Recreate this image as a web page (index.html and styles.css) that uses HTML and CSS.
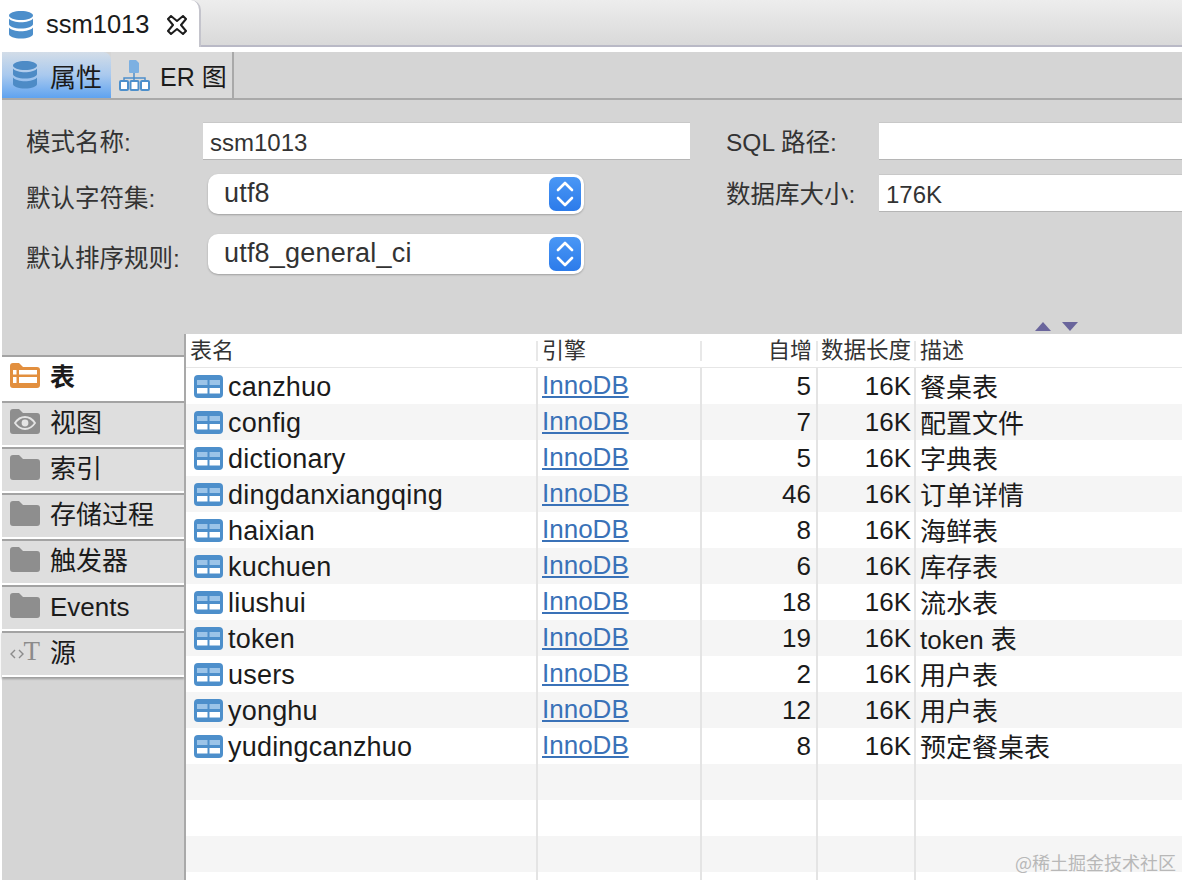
FILE: index.html
```html
<!DOCTYPE html>
<html lang="zh">
<head>
<meta charset="utf-8">
<title>ssm1013</title>
<link rel="stylesheet" href="styles.css">
</head>
<body>
<svg class="defs" width="0" height="0" aria-hidden="true">
  <defs>
    <symbol id="db" viewBox="0 0 26 28">
      <path fill="currentColor" d="M1 4.500C1 1.800 6.400 0 13 0s12 1.800 12 4.500S19.600 9 13 9 1 7.200 1 4.500z"/>
      <path fill="currentColor" d="M1 7.500C3 10.200 8 11.200 13 11.200s10-1 12-3.700V13c0 2.700-5.400 4.500-12 4.500S1 15.700 1 13z"/>
      <path fill="currentColor" d="M1 16.500c2 2.700 7 3.700 12 3.700s10-1 12-3.700V23c0 2.700-5.400 4.500-12 4.500S1 25.700 1 23z"/>
    </symbol>
    <symbol id="tbl" viewBox="0 0 29 23">
      <rect width="29" height="23" rx="4" fill="#4d8fcb"/>
      <rect x="3" y="5" width="10.500" height="5" fill="#9cc4e8"/>
      <rect x="15.500" y="5" width="10.500" height="5" fill="#9cc4e8"/>
      <rect x="3" y="13" width="10.500" height="5.500" fill="#fff"/>
      <rect x="15.500" y="13" width="10.500" height="5.500" fill="#fff"/>
    </symbol>
    <symbol id="folder" viewBox="0 0 30 25">
      <path fill="#8e8e8e" d="M0 3a3 3 0 0 1 3-3h6l4 4h14a3 3 0 0 1 3 3v15a3 3 0 0 1-3 3H3a3 3 0 0 1-3-3z"/>
    </symbol>
  </defs>
</svg>

<div class="tabbar">
  <div class="doc-tab">
    <svg class="doc-icon"><use href="#db"/></svg>
    <span>ssm1013</span>
    <svg class="close" viewBox="0 0 22 20">
      <path fill="#fff" stroke="#1c1c1c" stroke-width="2" stroke-linejoin="round" d="M2 4l3-3 6 5 6-5 3 3-5 6 5 6-3 3-6-5-6 5-3-3 5-6z"/>
    </svg>
  </div>
</div>

<div class="subtabs">
  <div class="subtab active">
    <svg class="sub-db"><use href="#db"/></svg>
    <span>属性</span>
  </div>
  <div class="subtab er">
    <svg class="er-icon" viewBox="0 0 32 32">
      <path d="M11 1h6l3 3v9a1 1 0 0 1-1 1h-8a1 1 0 0 1-1-1V2a1 1 0 0 1 1-1z" fill="#7cb0e2"/>
      <path d="M15 14v5M5 21v-2h21v2M15 19v2" fill="none" stroke="#4d8fcb" stroke-width="1.500"/>
      <g fill="#fff" stroke="#4d8fcb" stroke-width="2">
        <rect x="1" y="22" width="8" height="9" rx="1"/>
        <rect x="11.500" y="22" width="8" height="9" rx="1"/>
        <rect x="22" y="22" width="8" height="9" rx="1"/>
      </g>
    </svg>
    <span class="er-label">ER 图</span>
  </div>
</div>

<section class="form">
  <div class="form-col">
    <div class="field field-first">
      <label class="lbl">模式名称:</label>
      <div class="input wide">ssm1013</div>
    </div>
    <div class="field field-sel">
      <label class="lbl">默认字符集:</label>
      <div class="select">utf8<span class="stepper"><svg viewBox="0 0 32 34"><path d="M9 13l7-7 7 7M9 21l7 7 7-7" fill="none" stroke="#fff" stroke-width="2.600" stroke-linecap="round" stroke-linejoin="round"/></svg></span></div>
    </div>
    <div class="field field-sel2">
      <label class="lbl">默认排序规则:</label>
      <div class="select">utf8_general_ci<span class="stepper"><svg viewBox="0 0 32 34"><path d="M9 13l7-7 7 7M9 21l7 7 7-7" fill="none" stroke="#fff" stroke-width="2.600" stroke-linecap="round" stroke-linejoin="round"/></svg></span></div>
    </div>
  </div>
  <div class="form-col right">
    <div class="field field-first">
      <label class="lbl r-lbl">SQL 路径:</label>
      <div class="input grow"></div>
    </div>
    <div class="field field-r2">
      <label class="lbl r-lbl">数据库大小:</label>
      <div class="input grow">176K</div>
    </div>
  </div>
  <div class="split-arrows">
    <svg viewBox="0 0 16 9"><path d="M8 0l8 9H0z" fill="#6a659c"/></svg>
    <svg viewBox="0 0 16 9"><path d="M0 0h16L8 9z" fill="#6a659c"/></svg>
  </div>
</section>

<div class="lower">
  <nav class="side">
    <div class="side-gap"></div>
    <div class="side-item selected">
      <svg class="side-icon" viewBox="0 0 30 25"><path fill="#e28f3e" d="M0 3a3 3 0 0 1 3-3h6l4 4h14a3 3 0 0 1 3 3v15a3 3 0 0 1-3 3H3a3 3 0 0 1-3-3z"/><g fill="#fff"><rect x="3" y="7" width="3.500" height="4.500"/><rect x="9" y="7" width="18" height="4.500"/><rect x="3" y="14" width="3.500" height="6"/><rect x="9" y="14" width="18" height="6"/></g></svg>
      <span>表</span>
    </div>
    <div class="side-item">
      <svg class="side-icon" viewBox="0 0 30 25"><path fill="#8e8e8e" d="M0 3a3 3 0 0 1 3-3h6l4 4h14a3 3 0 0 1 3 3v15a3 3 0 0 1-3 3H3a3 3 0 0 1-3-3z"/><path fill="none" stroke="#e4e4e4" stroke-width="1.800" d="M5 14c3-4.500 7-6 10-6s7 1.500 10 6c-3 4.500-7 6-10 6s-7-1.500-10-6z"/><circle cx="15" cy="14" r="3.400" fill="#e4e4e4"/></svg>
      <span>视图</span>
    </div>
    <div class="side-item"><svg class="side-icon"><use href="#folder"/></svg><span>索引</span></div>
    <div class="side-item"><svg class="side-icon"><use href="#folder"/></svg><span>存储过程</span></div>
    <div class="side-item"><svg class="side-icon"><use href="#folder"/></svg><span>触发器</span></div>
    <div class="side-item"><svg class="side-icon"><use href="#folder"/></svg><span>Events</span></div>
    <div class="side-item">
      <span class="src-icon"><svg class="chev" viewBox="0 0 14 10"><path d="M5 1L1 5l4 4M9 1l4 4-4 4" fill="none" stroke="#8b8b8b" stroke-width="1.400"/></svg>T</span>
      <span>源</span>
    </div>
  </nav>

  <main class="grid">
    <div class="row head">
      <div class="c name">表名</div>
      <div class="c eng">引擎</div>
      <div class="c num">自增</div>
      <div class="c num len">数据长度</div>
      <div class="c desc">描述</div>
    </div>
    <div class="row"><div class="c name"><svg class="t-icon"><use href="#tbl"/></svg>canzhuo</div><div class="c eng"><a>InnoDB</a></div><div class="c num">5</div><div class="c num len">16K</div><div class="c desc">餐桌表</div></div>
    <div class="row"><div class="c name"><svg class="t-icon"><use href="#tbl"/></svg>config</div><div class="c eng"><a>InnoDB</a></div><div class="c num">7</div><div class="c num len">16K</div><div class="c desc">配置文件</div></div>
    <div class="row"><div class="c name"><svg class="t-icon"><use href="#tbl"/></svg>dictionary</div><div class="c eng"><a>InnoDB</a></div><div class="c num">5</div><div class="c num len">16K</div><div class="c desc">字典表</div></div>
    <div class="row"><div class="c name"><svg class="t-icon"><use href="#tbl"/></svg>dingdanxiangqing</div><div class="c eng"><a>InnoDB</a></div><div class="c num">46</div><div class="c num len">16K</div><div class="c desc">订单详情</div></div>
    <div class="row"><div class="c name"><svg class="t-icon"><use href="#tbl"/></svg>haixian</div><div class="c eng"><a>InnoDB</a></div><div class="c num">8</div><div class="c num len">16K</div><div class="c desc">海鲜表</div></div>
    <div class="row"><div class="c name"><svg class="t-icon"><use href="#tbl"/></svg>kuchuen</div><div class="c eng"><a>InnoDB</a></div><div class="c num">6</div><div class="c num len">16K</div><div class="c desc">库存表</div></div>
    <div class="row"><div class="c name"><svg class="t-icon"><use href="#tbl"/></svg>liushui</div><div class="c eng"><a>InnoDB</a></div><div class="c num">18</div><div class="c num len">16K</div><div class="c desc">流水表</div></div>
    <div class="row"><div class="c name"><svg class="t-icon"><use href="#tbl"/></svg>token</div><div class="c eng"><a>InnoDB</a></div><div class="c num">19</div><div class="c num len">16K</div><div class="c desc">token 表</div></div>
    <div class="row"><div class="c name"><svg class="t-icon"><use href="#tbl"/></svg>users</div><div class="c eng"><a>InnoDB</a></div><div class="c num">2</div><div class="c num len">16K</div><div class="c desc">用户表</div></div>
    <div class="row"><div class="c name"><svg class="t-icon"><use href="#tbl"/></svg>yonghu</div><div class="c eng"><a>InnoDB</a></div><div class="c num">12</div><div class="c num len">16K</div><div class="c desc">用户表</div></div>
    <div class="row"><div class="c name"><svg class="t-icon"><use href="#tbl"/></svg>yudingcanzhuo</div><div class="c eng"><a>InnoDB</a></div><div class="c num">8</div><div class="c num len">16K</div><div class="c desc">预定餐桌表</div></div>
    <div class="row"><div class="c name"></div><div class="c eng"></div><div class="c num"></div><div class="c num len"></div><div class="c desc"></div></div>
    <div class="row"><div class="c name"></div><div class="c eng"></div><div class="c num"></div><div class="c num len"></div><div class="c desc"></div></div>
    <div class="row"><div class="c name"></div><div class="c eng"></div><div class="c num"></div><div class="c num len"></div><div class="c desc"></div></div>
    <div class="row"><div class="c name"></div><div class="c eng"></div><div class="c num"></div><div class="c num len"></div><div class="c desc"></div></div>
  </main>
</div>

<div class="watermark">@稀土掘金技术社区</div>
</body>
</html>
```

FILE: styles.css
```css
* { box-sizing: border-box; }
html, body { margin: 0; height: 880px; overflow: hidden; }
body {
  position: relative;
  width: 1182px;
  background: #fff;
  color: #1b1b1b;
  font-family: "Liberation Sans", "Noto Sans CJK SC", sans-serif;
  font-size: 26px;
}
.defs { position: absolute; }

/* document tab bar */
.tabbar {
  height: 47px;
  background: linear-gradient(#ededed, #d9d9d9);
  border-bottom: 2px solid #b9b9c6;
  display: flex;
}
.doc-tab {
  width: 201px;
  height: 47px;
  background: #fff;
  border-right: 2px solid #c4c4cc;
  border-top-right-radius: 10px;
  display: flex;
  align-items: center;
  padding: 2px 0 0 8px;
  font-size: 25.500px;
}
.doc-icon { width: 26px; height: 28px; color: #4d8fcb; margin-right: 12px; flex: none; }
.close { width: 22px; height: 20px; margin-left: 17px; flex: none; }

/* sub tabs */
.subtabs {
  margin-top: 5px;
  margin-left: 2px;
  height: 48px;
  background: #d5d5d5;
  border-bottom: 2px solid #a9a9a9;
  display: flex;
}
.subtab { display: flex; align-items: center; height: 46px; }
.subtab.active {
  width: 109px;
  padding-left: 10px;
  background: linear-gradient(#d3dde8 0%, #a9c9ee 50%, #5fa3f0 100%);
  border-top-right-radius: 8px;
}
.sub-db { width: 26px; height: 28px; color: #4d8bc6; margin-right: 12px; flex: none; }
.subtab.er {
  width: 123px;
  padding-left: 8px;
  background: #dadada;
  border-right: 2px solid #a9a9a9;
}
.er-icon { width: 32px; height: 32px; margin-right: 9px; flex: none; }
.er-label { font-size: 25px; }

/* properties form */
.form {
  position: relative;
  height: 234px;
  margin-left: 2px;
  background: #d5d5d5;
  padding-left: 24px;
  display: flex;
  color: #333;
  font-size: 24.500px;
}
.form-col { width: 664px; flex: none; }
.form-col.right { width: 456px; margin-left: 36px; }
.field { display: flex; align-items: center; }
.field-first { padding-top: 22px; }
.field-sel { margin-top: 14px; }
.field-sel2 { margin-top: 20px; }
.field-r2 { margin-top: 14px; }
.lbl { width: 177px; flex: none; line-height: 28px; }
.field-first .lbl { padding-top: 4px; }
.field-r2 .lbl { padding-top: 4px; }
.field-sel .lbl { padding-top: 9px; }
.field-sel2 .lbl { padding-top: 9px; }
.r-lbl { width: 153px; }
.input {
  height: 38px;
  background: #fff;
  border-top: 1px solid #c8c8c8;
  border-bottom: 1px solid #b5b5b5;
  padding: 3px 0 0 7px;
  display: flex;
  align-items: center;
  font-size: 24px;
}
.input.wide { width: 487px; }
.input.grow { width: 303px; }
.select {
  position: relative;
  width: 376px;
  height: 40px;
  margin-left: 5px;
  background: #fff;
  border-radius: 10px;
  box-shadow: 0 1px 2px rgba(0, 0, 0, .25);
  padding: 0 0 2px 16px;
  display: flex;
  align-items: center;
  font-size: 27px;
  letter-spacing: .2px;
}
.stepper {
  position: absolute;
  right: 3px;
  top: 3px;
  width: 32px;
  height: 34px;
  border-radius: 7px;
  background: linear-gradient(#4a97f5, #2c7bea);
  display: flex;
}
.stepper svg { width: 32px; height: 34px; }
.split-arrows {
  position: absolute;
  right: 104px;
  bottom: 3px;
  display: flex;
  gap: 11px;
}
.split-arrows svg { width: 16px; height: 9px; display: block; }

/* lower split */
.lower { display: flex; height: 547px; margin-left: 2px; }
.side {
  width: 184px;
  flex: none;
  background: #d5d5d5;
  border-right: 2px solid #a9a9a9;
}
.side-gap { height: 21px; }
.side-item {
  height: 46px;
  display: flex;
  align-items: center;
  padding: 0 0 2px 8px;
  background: #dedede;
  border-top: 2px solid #a3a3a3;
  border-bottom: 2px solid #fff;
  font-size: 26px;
}
.side-item span:last-child { line-height: 1; }
.side-item.selected { background: #fff; font-weight: 700; font-size: 25px; }
.side-item:last-child { box-shadow: 0 2px 2px #9d9d9d; }
.side-icon { width: 30px; height: 25px; margin-right: 10px; flex: none; margin-top: -4px; }
.src-icon {
  display: flex;
  align-items: center;
  justify-content: flex-end;
  width: 30px;
  margin-right: 10px;
  margin-top: -4px;
  color: #8b8b8b;
  font-family: "Liberation Serif", serif;
  font-size: 27px;
  line-height: 1;
}
.chev { width: 14px; height: 10px; flex: none; margin-top: 5px; }

/* table grid */
.grid { flex: 1; min-width: 0; background: #fff; }
.row {
  display: grid;
  grid-template-columns: 352px 164px 116px 98px 1fr;
  height: 36px;
  font-size: 26px;
  color: #1b1b1b;
}
.row:nth-child(odd) { background: #f5f5f5; }
.row.head {
  height: 35px;
  background: #fff;
  border-bottom: 1px solid #e6e6e6;
  font-size: 22px;
  color: #333;
  margin-top: -1px;
}
.c {
  display: flex;
  align-items: center;
  border-right: 2px solid #e4e4e4;
  padding: 1px 4px 0;
  overflow: hidden;
  white-space: nowrap;
}
.name { font-size: 27px; letter-spacing: .2px; padding-top: 3px; }
.num { justify-content: flex-end; padding-right: 5px; }
.len { padding-right: 3px; }
.desc { border-right: 0; padding-top: 0; padding-bottom: 1px; }
.eng { padding: 0 4px 2px; }
.row.head .c {
  border-right: 0;
  padding-right: 6px;
  padding-top: 0;
  padding-bottom: 5px;
  font-size: 22px;
  letter-spacing: 0;
  background: linear-gradient(#e8e8e8, #e8e8e8) right 8px / 2px 20px no-repeat;
}
.row.head .desc { background: none; }
.row.head .len { padding-right: 5px; font-size: 22.500px; }
.t-icon { width: 29px; height: 23px; margin: 0 5px 0 4px; flex: none; position: relative; top: -1px; }
a { color: #3a72b8; text-decoration: underline; }

.watermark {
  position: absolute;
  right: 6px;
  bottom: 5px;
  font-size: 18px;
  color: #b8b8b8;
  font-family: "Noto Sans CJK SC", sans-serif;
}
```
